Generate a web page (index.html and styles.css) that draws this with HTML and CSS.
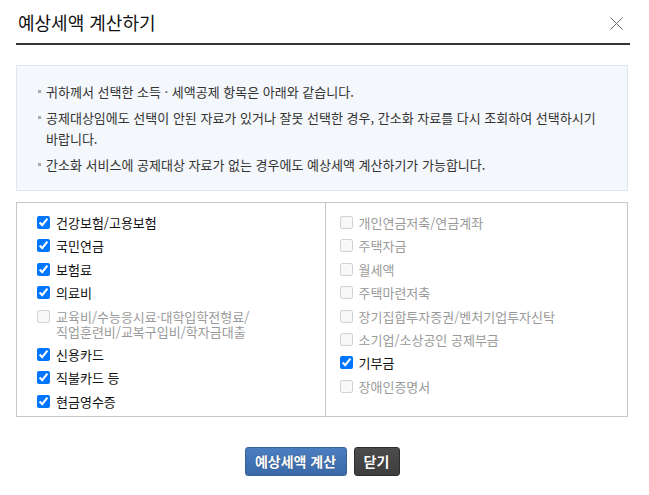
FILE: index.html
```html
<!DOCTYPE html>
<html lang="ko">
<head>
<meta charset="UTF-8">
<meta name="viewport" content="width=device-width, initial-scale=1.0">
<title>예상세액 계산하기</title>
<link rel="stylesheet" href="styles.css">
</head>
<body>

<!-- 팝업 -->
<div class="popup">
  <div class="popup-head">
    <h1 class="popup-title">예상세액 계산하기</h1>
    <button class="btn-close" type="button" aria-label="닫기">
      <svg width="13" height="13" viewBox="0 0 13 13"><path d="M0.5 0.5 L12.5 12.5 M12.5 0.5 L0.5 12.5" stroke="#666" stroke-width="1" fill="none"/></svg>
    </button>
  </div>

  <!-- 안내 -->
  <ul class="notice">
    <li>귀하께서 선택한 소득 · 세액공제 항목은 아래와 같습니다.</li>
    <li>공제대상임에도 선택이 안된 자료가 있거나 잘못 선택한 경우, 간소화 자료를 다시 조회하여 선택하시기 바랍니다.</li>
    <li>간소화 서비스에 공제대상 자료가 없는 경우에도 예상세액 계산하기가 가능합니다.</li>
  </ul>

  <!-- 항목 -->
  <div class="items">
    <div class="col col-left">
      <label class="item"><input type="checkbox" checked><span>건강보험/고용보험</span></label>
      <label class="item"><input type="checkbox" checked><span>국민연금</span></label>
      <label class="item"><input type="checkbox" checked><span>보험료</span></label>
      <label class="item"><input type="checkbox" checked><span>의료비</span></label>
      <label class="item off"><input type="checkbox" disabled><span>교육비/수능응시료·대학입학전형료/<br>직업훈련비/교복구입비/학자금대출</span></label>
      <label class="item"><input type="checkbox" checked><span>신용카드</span></label>
      <label class="item"><input type="checkbox" checked><span>직불카드 등</span></label>
      <label class="item"><input type="checkbox" checked><span>현금영수증</span></label>
    </div>
    <div class="col col-right">
      <label class="item off"><input type="checkbox" disabled><span>개인연금저축/연금계좌</span></label>
      <label class="item off"><input type="checkbox" disabled><span>주택자금</span></label>
      <label class="item off"><input type="checkbox" disabled><span>월세액</span></label>
      <label class="item off"><input type="checkbox" disabled><span>주택마련저축</span></label>
      <label class="item off"><input type="checkbox" disabled><span>장기집합투자증권/벤처기업투자신탁</span></label>
      <label class="item off"><input type="checkbox" disabled><span>소기업/소상공인 공제부금</span></label>
      <label class="item"><input type="checkbox" checked><span>기부금</span></label>
      <label class="item off"><input type="checkbox" disabled><span>장애인증명서</span></label>
    </div>
  </div>

  <!-- 버튼 -->
  <div class="btns">
    <button class="btn btn-blue" type="button">예상세액 계산</button>
    <button class="btn btn-dark" type="button">닫기</button>
  </div>
</div>

</body>
</html>
```

FILE: styles.css
```css
/* 기본 */
html, body {
  margin: 0;
  padding: 0;
  background: #fff;
}

body {
  font-family: "Noto Sans CJK KR", "Noto Sans", sans-serif;
  color: #222;
}

/* 팝업 */
.popup {
  width: 612px;
  padding-left: 16px;
}

.popup-head {
  height: 43px;
  margin-right: -2px;
  border-bottom: 2px solid #333;
  display: flex;
  align-items: center;
  justify-content: space-between;
}

.popup-title {
  margin: 0 0 0 2px;
  font-size: 18px;
  font-weight: normal;
  line-height: 20px;
  color: #111;
}

.btn-close {
  border: none;
  background: none;
  padding: 0;
  margin: 3px 7px 0 0;
  width: 13px;
  height: 13px;
  display: flex;
  cursor: pointer;
}

/* 안내 박스 */
.notice {
  list-style: none;
  margin: 20px 0 0 0;
  padding: 15px 10px 15px 29px;
  background: #f4f7fb;
  border: 1px solid #e1e7f0;
  font-size: 13px;
  line-height: 21px;
  color: #333;
  word-break: keep-all;
}

.notice li {
  position: relative;
  margin-bottom: 5px;
}

.notice li:last-child {
  margin-bottom: 0;
}

.notice li::before {
  content: "";
  position: absolute;
  left: -8px;
  top: 9px;
  width: 3px;
  height: 3px;
  background: #aaa;
}

/* 체크 항목 */
.items {
  margin-top: 11px;
  border: 1px solid #c8c8c8;
  display: flex;
}

.col {
  flex: 1;
  display: flex;
  flex-direction: column;
  gap: 8.4px;
  padding-top: 12px;
  padding-bottom: 7px;
}

.col-left {
  padding-left: 20px;
  border-right: 1px solid #c8c8c8;
}

.col-right {
  padding-left: 14px;
}

.item {
  display: flex;
  align-items: flex-start;
  font-size: 13px;
  line-height: 15px;
  color: #111;
}

.item input {
  width: 13px;
  height: 13px;
  margin: 1px 6px 0 0;
  flex: none;
}

.item.off {
  color: #9a9a9a;
}

/* 버튼 */
.btns {
  margin-top: 30px;
  display: flex;
  justify-content: center;
  gap: 7px;
}

.btn {
  height: 29px;
  padding: 0;
  border-radius: 3px;
  font-family: "Noto Sans CJK KR", sans-serif;
  font-size: 14px;
  font-weight: bold;
  color: #fff;
  cursor: pointer;
  text-shadow: 0 0 1px rgba(0,0,0,0.4);
}

.btn-blue {
  width: 102px;
  background: linear-gradient(#4a7dc0, #3b69a8);
  border: 1px solid #36619b;
}

.btn-dark {
  width: 46px;
  background: linear-gradient(#4c4c4c, #3e3e3e);
  border: 1px solid #2e2e2e;
}
```
